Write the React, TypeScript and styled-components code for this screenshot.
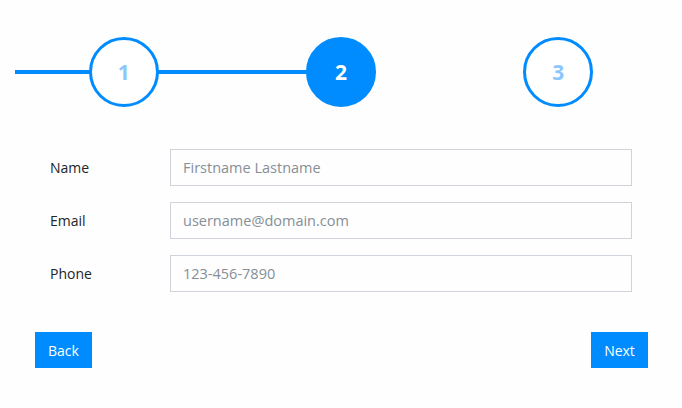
import React from 'react';
import styled, { createGlobalStyle } from 'styled-components';

const blue = '#008cff';

const GlobalStyle = createGlobalStyle`
    body {
        margin: 0;
        background: #fefefe;
        font-family: "Open Sans", "Liberation Sans", sans-serif;
        color: #212529;
    }
`;

const Page = styled.div`
    padding-top: 37px;
`;

const Stepper = styled.div`
    position: relative;
    display: flex;
    margin: 0 15px;
`;

const Track = styled.div`
    position: absolute;
    left: 0;
    top: 50%;
    height: 4px;
    transform: translateY(-50%);
    background: ${blue};
`;

const Step = styled.div`
    flex: 1;
    display: flex;
    justify-content: center;
`;

const Circle = styled.div<{ $active?: boolean }>`
    position: relative;
    z-index: 1;
    box-sizing: border-box;
    width: 70px;
    height: 70px;
    border-radius: 50%;
    border: 3px solid ${blue};
    background: ${(p) => (p.$active ? blue : '#fff')};
    color: ${(p) => (p.$active ? '#fff' : '#8cc6fb')};
    display: flex;
    align-items: center;
    justify-content: center;
    font-size: 21px;
    font-weight: 700;
`;

const Form = styled.form`
    display: flex;
    flex-direction: column;
    gap: 16px;
    margin-top: 42px;
    padding: 0 35px;
`;

const Row = styled.div`
    display: grid;
    grid-template-columns: 120px 1fr;
    align-items: center;
    padding: 0 15px;
`;

const Label = styled.label`
    font-size: 14px;
    color: #212529;
`;

const Input = styled.input`
    box-sizing: border-box;
    height: 37px;
    width: 100%;
    padding: 0 12px;
    border: 1px solid #ced4da;
    border-radius: 0;
    background: #fefefe;
    font-family: inherit;
    font-size: 14.5px;
    color: #495057;
    outline: none;
    &::placeholder {
        color: #868e96;
    }
`;

const Footer = styled.div`
    display: flex;
    justify-content: space-between;
    padding: 0 34px 0 35px;
    margin-top: 40px;
`;

const Button = styled.button`
    width: 57px;
    height: 36px;
    border: none;
    border-radius: 0;
    background: ${blue};
    color: #fff;
    font-family: inherit;
    font-size: 14px;
    padding: 0;
    cursor: pointer;
`;

const steps = [1, 2, 3];
const current = 2;

const fields = [
    { label: 'Name', placeholder: 'Firstname Lastname' },
    { label: 'Email', placeholder: 'username@domain.com' },
    { label: 'Phone', placeholder: '123-456-7890' },
];

export default function App() {
    const progress = ((current - 1) / (steps.length - 1)) * 100;
    return (
        <Page>
            <GlobalStyle />
            <Stepper>
                <Track style={{ width: `${progress}%` }} />
                {steps.map((s) => (
                    <Step key={s}>
                        <Circle $active={s === current}>{s}</Circle>
                    </Step>
                ))}
            </Stepper>
            <Form>
                {fields.map((f) => (
                    <Row key={f.label}>
                        <Label>{f.label}</Label>
                        <Input placeholder={f.placeholder} />
                    </Row>
                ))}
            </Form>
            <Footer>
                <Button>Back</Button>
                <Button>Next</Button>
            </Footer>
        </Page>
    );
}
